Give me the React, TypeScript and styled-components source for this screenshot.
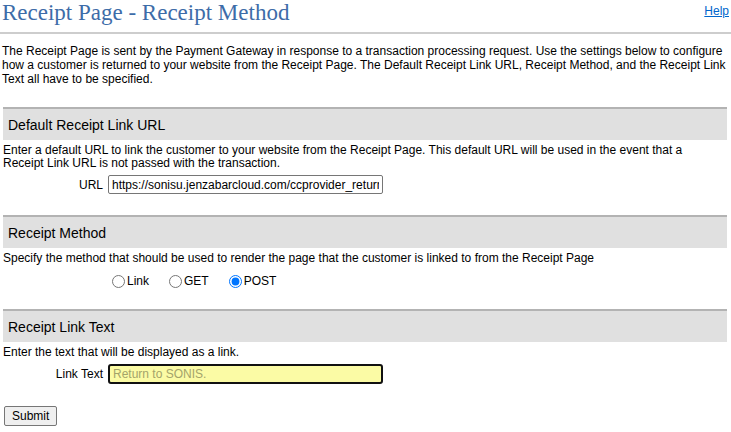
import React from "react";
import styled, { createGlobalStyle } from "styled-components";

const GlobalStyle = createGlobalStyle`
  html, body { margin: 0; padding: 0; background: #fff; }
  body {
    font-family: "Liberation Sans", Arial, sans-serif;
    font-size: 12px;
    color: #000;
  }
`;

const TopBar = styled.header`
  display: flex;
  justify-content: space-between;
  align-items: flex-start;
  height: 32px;
  padding: 0 2px;
  border-bottom: 2px solid #cdcdcd;
`;

const Title = styled.h1`
  margin: 0;
  font-family: "Liberation Serif", "Times New Roman", serif;
  font-weight: normal;
  font-size: 23px;
  line-height: 25px;
  color: #3d6ca8;
`;

const HelpLink = styled.a`
  margin-top: 4px;
  font-size: 12px;
  color: #0066cc;
  text-decoration: underline;
`;

const Intro = styled.p`
  margin: 10px 0 0;
  padding: 0 2px;
  line-height: 14px;
`;

const Section = styled.section`
  margin: 21px 4px 0 3px;
`;

const SectionHeader = styled.h2`
  margin: 0;
  display: flex;
  align-items: center;
  height: 31px;
  padding-left: 5px;
  border-top: 2px solid #b3b3b3;
  background: #e0e0e0;
  font-size: 14px;
  font-weight: normal;
`;

const Description = styled.p`
  margin: 4px 0 0;
  padding-right: 30px;
  line-height: 13px;
`;

const FieldRow = styled.div`
  display: grid;
  grid-template-columns: 100px 280px;
  align-items: center;
  column-gap: 5px;
  margin-top: 5px;
`;

const FieldLabel = styled.label`
  text-align: right;
`;

const TextInput = styled.input<{ $highlight?: boolean }>`
  box-sizing: border-box;
  width: 275px;
  height: ${(p) => (p.$highlight ? "20px" : "19px")};
  margin: 0;
  padding: 0 3px;
  font-family: "Liberation Sans", Arial, sans-serif;
  font-size: 12px;
  color: ${(p) => (p.$highlight ? "#a4a46a" : "#000")};
  background: ${(p) => (p.$highlight ? "#fbfba5" : "#fff")};
  border: ${(p) => (p.$highlight ? "2px solid #111" : "1px solid #767676")};
  border-radius: ${(p) => (p.$highlight ? "3px" : "2px")};
  outline: none;
`;

const RadioRow = styled.div`
  display: flex;
  align-items: center;
  gap: 20px;
  padding-left: 109px;
  margin-top: 9px;
`;

const RadioOption = styled.label`
  display: inline-flex;
  align-items: center;
  gap: 2px;
`;

const Radio = styled.input`
  margin: 0;
  width: 13px;
  height: 13px;
`;

const SubmitButton = styled.button`
  margin: 22px 0 0 4px;
  height: 20px;
  padding: 0 7px;
  font-family: "Liberation Sans", Arial, sans-serif;
  font-size: 12px;
  color: #000;
  background: #efefef;
  border: 1px solid #767676;
  border-radius: 2px;
`;

export default function App() {
  return (
    <>
      <GlobalStyle />
      <TopBar>
        <Title>Receipt Page - Receipt Method</Title>
        <HelpLink href="#">Help</HelpLink>
      </TopBar>
      <Intro>
        The Receipt Page is sent by the Payment Gateway in response to a transaction processing request. Use the settings below to configure
        how a customer is returned to your website from the Receipt Page. The Default Receipt Link URL, Receipt Method, and the Receipt Link
        Text all have to be specified.
      </Intro>

      <Section>
        <SectionHeader>Default Receipt Link URL</SectionHeader>
        <Description>
          Enter a default URL to link the customer to your website from the Receipt Page. This default URL will be used in the event that a
          Receipt Link URL is not passed with the transaction.
        </Description>
        <FieldRow>
          <FieldLabel>URL</FieldLabel>
          <TextInput defaultValue="https://sonisu.jenzabarcloud.com/ccprovider_return.cfm" />
        </FieldRow>
      </Section>

      <Section>
        <SectionHeader>Receipt Method</SectionHeader>
        <Description>
          Specify the method that should be used to render the page that the customer is linked to from the Receipt Page
        </Description>
        <RadioRow>
          <RadioOption>
            <Radio type="radio" name="method" />
            Link
          </RadioOption>
          <RadioOption>
            <Radio type="radio" name="method" />
            GET
          </RadioOption>
          <RadioOption>
            <Radio type="radio" name="method" defaultChecked />
            POST
          </RadioOption>
        </RadioRow>
      </Section>

      <Section>
        <SectionHeader>Receipt Link Text</SectionHeader>
        <Description>Enter the text that will be displayed as a link.</Description>
        <FieldRow>
          <FieldLabel>Link Text</FieldLabel>
          <TextInput $highlight defaultValue="Return to SONIS." />
        </FieldRow>
      </Section>

      <SubmitButton type="button">Submit</SubmitButton>
    </>
  );
}
